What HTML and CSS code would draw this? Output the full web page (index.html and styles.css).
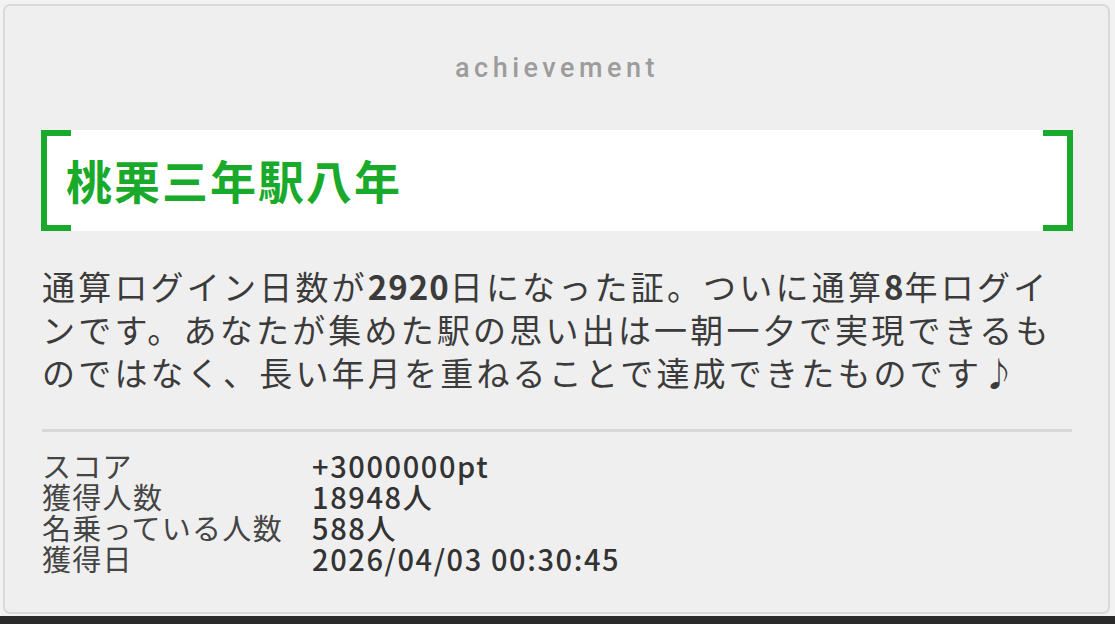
FILE: index.html
```html
<!DOCTYPE html>
<html lang="ja">
<head>
    <meta charset="utf-8">
    <title>achievement</title>
    <link rel="stylesheet" href="styles.css">
</head>
<body>
    <div class="card">
        <div class="card-label">achievement</div>

        <div class="title-box">
            <h1 class="title">桃栗三年駅八年</h1>
        </div>

        <p class="description">通算ログイン日数が<b>2920</b>日になった証。ついに通算<b>8</b>年ログインです。あなたが集めた駅の思い出は一朝一夕で実現できるものではなく、長い年月を重ねることで達成できたものです♪</p>

        <hr class="divider">

        <dl class="stats">
            <dt>スコア</dt><dd>+3000000pt</dd>
            <dt>獲得人数</dt><dd>18948人</dd>
            <dt>名乗っている人数</dt><dd>588人</dd>
            <dt>獲得日</dt><dd>2026/04/03 00:30:45</dd>
        </dl>
    </div>
    <div class="bottom-bar"></div>
</body>
</html>
```

FILE: styles.css
```css
html, body {
    margin: 0;
    padding: 0;
}
body {
    background: #f2f2f2;
    font-family: "Noto Sans CJK JP", "Noto Sans", sans-serif;
    color: #3b3b3b;
    height: 624px;
    overflow: hidden;
}

.card {
    margin: 4px 0 0 3px;
    width: 1107px;
    height: 610px;
    box-sizing: border-box;
    background: #efefef;
    border: 2px solid #d9d9d9;
    border-radius: 7px;
    padding: 47px 36px 0 37px;
}

.card-label {
    text-align: center;
    font-family: Roboto, "Liberation Sans", sans-serif;
    font-weight: 500;
    font-size: 27px;
    line-height: 30px;
    letter-spacing: 4.5px;
    color: #9c9c9c;
}

.title-box {
    position: relative;
    margin-top: 47px;
    height: 101px;
    background: #fff;
    padding-left: 24px;
    display: flex;
    align-items: center;
}
.title-box::before,
.title-box::after {
    content: "";
    position: absolute;
    top: 0;
    width: 24px;
    height: 89px;
    border: 6px solid #19aa2b;
}
.title-box::before {
    left: -1px;
    border-right: none;
}
.title-box::after {
    right: -1px;
    border-left: none;
}
.title {
    margin: 0 0 3px;
    font-size: 46px;
    font-weight: 700;
    letter-spacing: 2px;
    color: #19aa2b;
    line-height: 1;
}

.description {
    margin: 34px 0 0;
    font-size: 33px;
    line-height: 43px;
    letter-spacing: 3.2px;
    color: #3b3b3b;
}
.description b {
    font-weight: 700;
    letter-spacing: 1px;
}

.divider {
    margin: 35px 0 0;
    border: none;
    height: 3px;
    background: #d7d7d7;
}

.stats {
    margin: 18px 0 0;
    display: grid;
    grid-template-columns: 270px 1fr;
    font-size: 29px;
    line-height: 31px;
}
.stats dt {
    color: #444;
    letter-spacing: 1.3px;
}
.stats dd {
    margin: 0;
    color: #333;
    font-weight: 500;
    letter-spacing: 1.6px;
}

.bottom-bar {
    margin-top: 2px;
    height: 8px;
    background: #2a2a2a;
}
```
